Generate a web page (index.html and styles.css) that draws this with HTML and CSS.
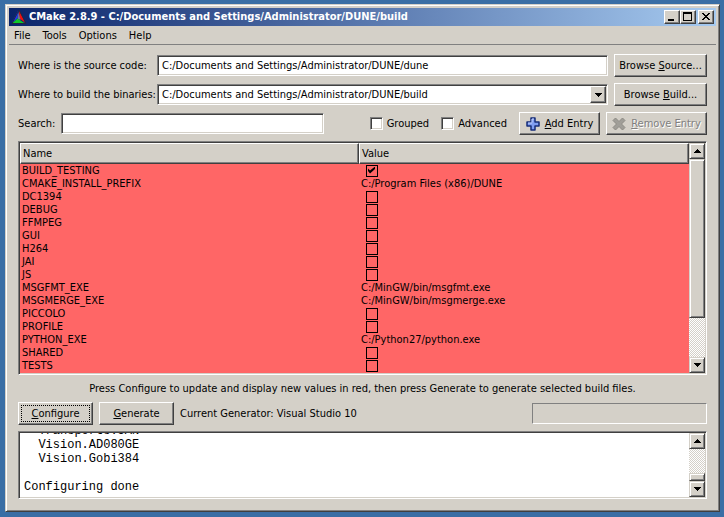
FILE: index.html
```html
<!DOCTYPE html>
<html lang="en">
<head>
<meta charset="utf-8">
<title>CMake 2.8.9 - C:/Documents and Settings/Administrator/DUNE/build</title>
<link rel="stylesheet" href="styles.css">
</head>
<body>
<div class="window">
  <header class="titlebar">
    <svg class="logo" viewBox="0 0 16 16" aria-hidden="true">
      <path d="M7.500 1 1 14 6.500 9z" fill="#2038ff"/>
      <path d="M8 1 14.500 14 8.500 9.500z" fill="#f01010"/>
      <path d="M1 14.500 6.500 9.500 14 14.500z" fill="#10c828"/>
      <path d="M7.500 3 6.500 9.500 9.500 11z" fill="#6c7890"/>
      <path d="M8 1 1 14.500H15z" fill="none" stroke="#202840" stroke-width="1"/>
    </svg>
    <h1>CMake 2.8.9 - C:/Documents and Settings/Administrator/DUNE/build</h1>
    <div class="caption-buttons">
      <button type="button" class="raised" aria-label="Minimize"><svg viewBox="0 0 14 12"><path d="M3 8h6v2H3z"/></svg></button>
      <button type="button" class="raised" aria-label="Maximize"><svg viewBox="0 0 14 12"><path fill-rule="evenodd" d="M2 1h9v9H2zM3 3v6h7V3z"/></svg></button>
      <button type="button" class="raised close" aria-label="Close"><svg viewBox="0 0 14 12"><path d="M3 2h2v1h1v1h2V3h1V2h2v1h-1v1H9v1H8v1h1v1h1v1h1v1H9V8H8V7H6v1H5v1H3V8h1V7h1V6h1V5H5V4H4V3H3z"/></svg></button>
    </div>
  </header>
  <nav class="menubar">
    <button type="button">File</button>
    <button type="button">Tools</button>
    <button type="button">Options</button>
    <button type="button">Help</button>
  </nav>
  <main class="content">
    <div class="paths">
      <label for="source">Where is the source code:</label>
      <input id="source" class="field sunken" type="text" value="C:/Documents and Settings/Administrator/DUNE/dune">
      <button type="button" class="push raised"><span>Browse <u>S</u>ource...</span></button>
      <label for="binary">Where to build the binaries:</label>
      <div class="combo sunken">
        <select id="binary"><option>C:/Documents and Settings/Administrator/DUNE/build</option></select>
        <span class="drop raised"><svg viewBox="0 0 7 4"><path d="M0 0h7v1H6v1H5v1H4v1H3V3H2V2H1V1H0z"/></svg></span>
      </div>
      <button type="button" class="push raised"><span>Browse <u>B</u>uild...</span></button>
    </div>
    <div class="toolbar">
      <label for="search">Search:</label>
      <input id="search" class="field search sunken" type="text">
      <label class="check"><input type="checkbox" class="sunken">Grouped</label>
      <label class="check"><input type="checkbox" class="sunken">Advanced</label>
      <button type="button" class="push raised add">
        <svg viewBox="0 0 14 14"><path d="M5 1h4v4h4v4H9v4H5V9H1V5h4z" fill="#7f9df0" stroke="#162c78" stroke-width="1.500" stroke-linejoin="round"/><path d="M6 5.500V2h2M2 6h4" fill="none" stroke="#c4d2ff"/></svg>
        <span><u>A</u>dd Entry</span>
      </button>
      <button type="button" class="push raised remove" disabled>
        <svg viewBox="0 0 14 14"><path d="M3.500 1 7 4.500 10.500 1 13 3.500 9.500 7 13 10.500 10.500 13 7 9.500 3.500 13 1 10.500 4.500 7 1 3.500z" fill="#a09e98" stroke="#8c8a84" stroke-linejoin="round"/></svg>
        <span><u>R</u>emove Entry</span>
      </button>
    </div>
    <div class="pane sunken cache">
      <div class="viewport">
        <table>
          <colgroup><col class="name-col"><col></colgroup>
          <thead><tr><th>Name</th><th>Value</th></tr></thead>
          <tbody>
            <tr><td>BUILD_TESTING</td><td><input type="checkbox" aria-label="BUILD_TESTING" checked></td></tr>
            <tr><td>CMAKE_INSTALL_PREFIX</td><td>C:/Program Files (x86)/DUNE</td></tr>
            <tr><td>DC1394</td><td><input type="checkbox" aria-label="DC1394"></td></tr>
            <tr><td>DEBUG</td><td><input type="checkbox" aria-label="DEBUG"></td></tr>
            <tr><td>FFMPEG</td><td><input type="checkbox" aria-label="FFMPEG"></td></tr>
            <tr><td>GUI</td><td><input type="checkbox" aria-label="GUI"></td></tr>
            <tr><td>H264</td><td><input type="checkbox" aria-label="H264"></td></tr>
            <tr><td>JAI</td><td><input type="checkbox" aria-label="JAI"></td></tr>
            <tr><td>JS</td><td><input type="checkbox" aria-label="JS"></td></tr>
            <tr><td>MSGFMT_EXE</td><td>C:/MinGW/bin/msgfmt.exe</td></tr>
            <tr><td>MSGMERGE_EXE</td><td>C:/MinGW/bin/msgmerge.exe</td></tr>
            <tr><td>PICCOLO</td><td><input type="checkbox" aria-label="PICCOLO"></td></tr>
            <tr><td>PROFILE</td><td><input type="checkbox" aria-label="PROFILE"></td></tr>
            <tr><td>PYTHON_EXE</td><td>C:/Python27/python.exe</td></tr>
            <tr><td>SHARED</td><td><input type="checkbox" aria-label="SHARED"></td></tr>
            <tr><td>TESTS</td><td><input type="checkbox" aria-label="TESTS"></td></tr>
          </tbody>
        </table>
      </div>
      <div class="scrollbar">
        <button type="button" class="key" aria-label="Scroll up"><svg viewBox="0 0 7 4"><path d="M3 0h1v1h1v1h1v1h1v1H0V3h1V2h1V1h1z"/></svg></button>
        <div class="thumb key"></div>
        <div class="track"></div>
        <button type="button" class="key" aria-label="Scroll down"><svg viewBox="0 0 7 4"><path d="M0 0h7v1H6v1H5v1H4v1H3V3H2V2H1V1H0z"/></svg></button>
      </div>
    </div>
    <p class="hint">Press Configure to update and display new values in red, then press Generate to generate selected build files.</p>
    <div class="actions">
      <button type="button" class="push raised focused"><span><u>C</u>onfigure</span></button>
      <button type="button" class="push raised"><span><u>G</u>enerate</span></button>
      <span>Current Generator: Visual Studio 10</span>
      <div class="progress" role="progressbar" aria-label="Progress"></div>
    </div>
    <div class="pane sunken output">
      <div class="viewport">
        <pre>  Transports.UAN
  Vision.AD080GE
  Vision.Gobi384

Configuring done</pre>
      </div>
      <div class="scrollbar">
        <button type="button" class="key" aria-label="Scroll up"><svg viewBox="0 0 7 4"><path d="M3 0h1v1h1v1h1v1h1v1H0V3h1V2h1V1h1z"/></svg></button>
        <div class="track"></div>
        <div class="thumb key"></div>
        <button type="button" class="key" aria-label="Scroll down"><svg viewBox="0 0 7 4"><path d="M0 0h7v1H6v1H5v1H4v1H3V3H2V2H1V1H0z"/></svg></button>
      </div>
    </div>
  </main>
</div>
</body>
</html>
```
FILE: styles.css
```css
:root {
  --face: #d4d0c8;
  --shadow: #808080;
  --dark: #404040;
}
* { box-sizing: border-box; }
body {
  margin: 0;
  height: 100vh;
  padding: 4px 4px 5px 5px;
  background: #3a6ea5;
  color: #000;
  font: 11px/15px "DejaVu Sans Condensed", "Liberation Sans", sans-serif;
}
button, input, select {
  margin: 0;
  padding: 0;
  border-radius: 0;
  font: inherit;
  color: inherit;
  appearance: none;
}
svg { display: block; flex: none; }
.raised {
  background: var(--face);
  border: 1px solid;
  border-color: #fff var(--dark) var(--dark) #fff;
  box-shadow: inset -1px -1px var(--shadow);
}
.sunken {
  background: #fff;
  border: 1px solid;
  border-color: var(--shadow) #fff #fff var(--shadow);
  box-shadow: inset 1px 1px var(--dark), inset -1px -1px var(--face);
}
.window {
  height: 100%;
  display: flex;
  flex-direction: column;
  padding: 3px;
  background: var(--face);
  border: 1px solid;
  border-color: var(--face) var(--dark) var(--dark) var(--face);
  box-shadow: inset 1px 1px #fff, inset -1px -1px var(--shadow);
}
.titlebar {
  height: 18px;
  flex: none;
  display: flex;
  align-items: center;
  gap: 2px;
  padding: 0 2px;
  background: linear-gradient(to right, #0a246a, #a6caf0);
  color: #fff;
}
.logo { width: 16px; height: 16px; }
h1 {
  flex: 1;
  margin: 0;
  font-size: 11px;
  line-height: 16px;
  white-space: nowrap;
  overflow: hidden;
}
.caption-buttons { display: flex; }
.caption-buttons button { width: 16px; height: 14px; }
.caption-buttons svg { width: 14px; height: 12px; }
.caption-buttons .close { margin-left: 2px; }
.menubar {
  height: 19px;
  flex: none;
  display: flex;
  gap: 12px;
  padding: 0 5px;
  border-bottom: 1px solid var(--shadow);
}
.menubar button { border: 0; background: none; }
.content {
  flex: 1;
  min-height: 0;
  display: flex;
  flex-direction: column;
  gap: 6px;
  padding: 9px;
}
.paths {
  display: grid;
  grid-template-columns: 133px 1fr 93px;
  gap: 6px;
  align-items: center;
  white-space: nowrap;
}
.push {
  height: 23px;
  display: flex;
  align-items: center;
  justify-content: center;
  gap: 5px;
  white-space: nowrap;
}
.field {
  height: 21px;
  min-width: 0;
  padding: 0 4px;
}
.combo { height: 21px; display: flex; padding: 1px; }
.combo select {
  flex: 1;
  min-width: 0;
  border: 0;
  padding: 0 3px;
  background: none;
}
.drop {
  width: 16px;
  display: flex;
  align-items: center;
  justify-content: center;
}
.drop svg, .key svg { width: 7px; height: 4px; }
.toolbar { display: flex; align-items: center; gap: 6px; white-space: nowrap; }
.search { flex: 0 1 263px; margin-right: auto; }
.check {
  display: flex;
  align-items: center;
  gap: 4px;
  margin-right: 6px;
}
.check input { width: 13px; height: 13px; }
.add { width: 81px; }
.remove { width: 101px; color: var(--shadow); text-shadow: 1px 1px #fff; }
.push svg { width: 14px; height: 14px; }
.pane { display: flex; padding: 1px; }
.viewport { flex: 1; min-width: 0; overflow: hidden; }
.cache { flex: 1; min-height: 0; }
.cache .viewport { background: #f66; }
table {
  width: 100%;
  table-layout: fixed;
  border-collapse: separate;
  border-spacing: 0;
  line-height: 13px;
}
.name-col { width: 339px; }
th {
  height: 21px;
  padding: 0 2px;
  background: var(--face);
  border: 1px solid;
  border-color: #fff var(--dark) var(--dark) #fff;
  box-shadow: inset -1px -1px var(--shadow);
  font-weight: normal;
  text-align: left;
}
td { height: 13px; padding: 0 3px 0 2px; }
td input {
  display: block;
  width: 12px;
  height: 12px;
  margin-left: 5px;
  border: 1px solid #000;
}
td input:checked::after {
  content: "";
  display: block;
  width: 7px;
  height: 7px;
  margin: 1px;
  background: #000;
  clip-path: polygon(0 29%, 29% 58%, 100% 0, 100% 36%, 29% 100%, 0 65%);
}
.scrollbar { width: 16px; flex: none; display: flex; flex-direction: column; }
.key {
  height: 16px;
  flex: none;
  display: flex;
  align-items: center;
  justify-content: center;
  background: var(--face);
  border: 1px solid;
  border-color: var(--face) var(--dark) var(--dark) var(--face);
  box-shadow: inset 1px 1px #fff, inset -1px -1px var(--shadow);
}
.track {
  flex: 1;
  background: repeating-conic-gradient(#fff 0 25%, var(--face) 0 50%) 0 0 / 2px 2px;
}
.cache .thumb { flex: 4; }
.output .thumb { height: 8px; }
.hint { margin: 0; text-align: center; white-space: nowrap; }
.actions { display: flex; align-items: center; gap: 6px; white-space: nowrap; }
.actions .push { width: 75px; }
.focused { position: relative; }
.focused::after {
  content: "";
  position: absolute;
  inset: 2px;
  border: 1px dotted #000;
}
.progress {
  width: 175px;
  height: 21px;
  margin-left: auto;
  border: 1px solid;
  border-color: var(--shadow) #fff #fff var(--shadow);
}
.output { height: 68px; flex: none; }
.output .viewport {
  display: flex;
  flex-direction: column;
  justify-content: flex-end;
  padding: 0 4px 3px;
}
pre { margin: 0; font: 12px/14px "Liberation Mono", monospace; }
```
